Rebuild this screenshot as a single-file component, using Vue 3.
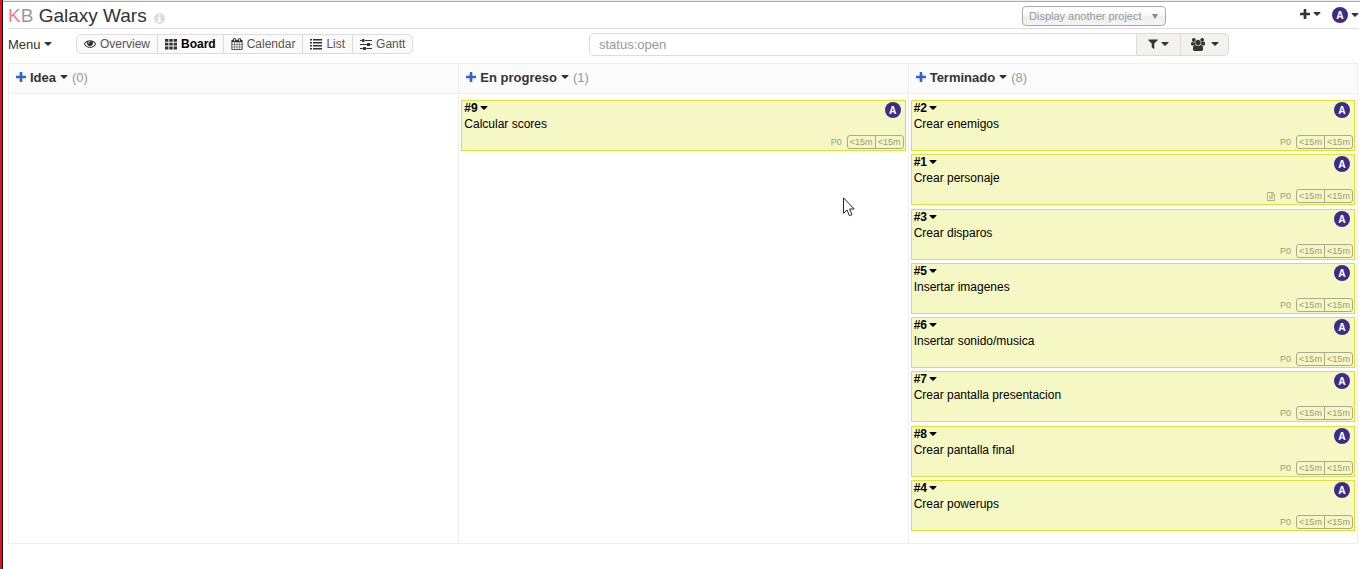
<script setup>
import { h, ref } from 'vue'

const glyphs = {
  caret: ['384 640 1024 576', 'M1408 704q0 26-19 45l-448 448q-19 19-45 19t-45-19l-448-448q-19-19-19-45t19-45 45-19h896q26 0 45 19t19 45z'],
  plus: ['192 128 1408 1408', 'M1600 736v192q0 40-28 68t-68 28h-416v416q0 40-28 68t-68 28h-192q-40 0-68-28t-28-68v-416h-416q-40 0-68-28t-28-68v-192q0-40 28-68t68-28h416v-416q0-40 28-68t68-28h192q40 0 68 28t28 68v416h416q40 0 68 28t28 68z'],
  info: ['128 128 1536 1536', 'M1152 1376v-160q0-14-9-23t-23-9h-96v-512q0-14-9-23t-23-9h-320q-14 0-23 9t-9 23v160q0 14 9 23t23 9h96v320h-96q-14 0-23 9t-9 23v160q0 14 9 23t23 9h448q14 0 23-9t9-23zm-128-896v-160q0-14-9-23t-23-9h-192q-14 0-23 9t-9 23v160q0 14 9 23t23 9h192q14 0 23-9t9-23zm640 416q0 209-103 385.5t-279.5 279.5-385.5 103-385.5-103-279.5-279.5-103-385.5 103-385.5 279.5-279.5 385.5-103 385.5 103 279.5 279.5 103 385.5z'],
  eye: ['0 64 1792 1792', 'M1664 960q-152-236-381-353 61 104 61 225 0 185-131.5 316.5t-316.5 131.5-316.5-131.5-131.5-316.5q0-121 61-225-229 117-381 353 133 205 333.5 326.5t434.5 121.5 434.5-121.5 333.5-326.5zm-720-384q0-20-14-34t-34-14q-125 0-214.5 89.5t-89.5 214.5q0 20 14 34t34 14 34-14 14-34q0-86 61-147t147-61q20 0 34-14t14-34zm848 384q0 34-20 69-140 230-376.5 368.5t-499.5 138.5-499.5-139-376.5-368q-20-35-20-69t20-69q140-229 376.5-368t499.5-139 499.5 139 376.5 368q20 35 20 69z'],
  grid: ['0 0 12 12', 'M0 1h3.4v2.8H0zM4.3 1h3.4v2.8H4.3zM8.6 1H12v2.8H8.6zM0 4.8h3.4v2.8H0zM4.3 4.8h3.4v2.8H4.3zM8.6 4.8H12v2.8H8.6zM0 8.6h3.4v2.8H0zM4.3 8.6h3.4v2.8H4.3zM8.6 8.6H12v2.8H8.6z'],
  calendar: ['0 0 1792 1792', 'M192 1664h288v-288h-288v288zm352 0h320v-288h-320v288zm-352-352h288v-320h-288v320zm352 0h320v-320h-320v320zm-352-384h288v-288h-288v288zm736 736h320v-288h-320v288zm-384-736h320v-288h-320v288zm768 736h288v-288h-288v288zm-384-352h320v-320h-320v320zm-352-864v-288q0-13-9.5-22.5t-22.5-9.5h-64q-13 0-22.5 9.5t-9.5 22.5v288q0 13 9.5 22.5t22.5 9.5h64q13 0 22.5-9.5t9.5-22.5zm736 864h288v-320h-288v320zm-384-384h320v-288h-320v288zm384 0h288v-288h-288v288zm32-480v-288q0-13-9.5-22.5t-22.5-9.5h-64q-13 0-22.5 9.5t-9.5 22.5v288q0 13 9.5 22.5t22.5 9.5h64q13 0 22.5-9.5t9.5-22.5zm384-64v1280q0 52-38 90t-90 38h-1408q-52 0-90-38t-38-90v-1280q0-52 38-90t90-38h128v-96q0-66 47-113t113-47h64q66 0 113 47t47 113v96h384v-96q0-66 47-113t113-47h64q66 0 113 47t47 113v96h128q52 0 90 38t38 90z'],
  list: ['0 0 12 12', 'M0 1h2v1.6H0zM3 1h9v1.6H3zM0 4h2v1.6H0zM3 4h9v1.6H3zM0 7h2v1.6H0zM3 7h9v1.6H3zM0 10h2v1.6H0zM3 10h9v1.6H3z'],
  sliders: ['0 0 1536 1536', 'M0 256h224v128H0zM640 256h896v128H640zM0 768h864v128H0zM1312 768h224v128h-224zM0 1280h352v128H0zM800 1280h736v128H800zM320 128h192q64 0 64 64v256q0 64-64 64H320q-64 0-64-64V192q0-64 64-64zM960 640h256q64 0 64 64v256q0 64-64 64H960q-64 0-64-64V704q0-64 64-64zM448 1152h256q64 0 64 64v256q0 64-64 64H448q-64 0-64-64v-256q0-64 64-64z'],
  filter: ['192 192 1408 1472', 'M1595 295q17 41-14 70l-493 493v742q0 42-39 59-13 5-25 5-27 0-45-19l-256-256q-19-19-19-45v-486l-493-493q-31-29-14-70 17-39 59-39h1280q42 0 59 39z'],
  users: ['-64 0 1920 1792', 'M529 896q-162 5-265 128h-134q-82 0-138-40.5t-56-118.5q0-353 124-353 6 0 43.5 21t97.5 42.5 119 21.5q67 0 133-23-5 37-5 66 0 159 93 287zm1071 637q0 120-73 189.5t-194 69.5h-874q-121 0-194-69.5t-73-189.5q0-53 3.5-103.5t14-109 26.5-108.5 43-97.5 62-81 85.5-53.5 111.5-20q10 0 43 21.5t73 48 107 48 135 21.5 135-21.5 107-48 73-48 43-21.5q61 0 111.5 20t85.5 53.5 62 81 43 97.5 26.5 108.5 14 109 3.5 103.5zm-1024-1277q0 106-75 181t-181 75-181-75-75-181 75-181 181-75 181 75 75 181zm704 384q0 159-112.5 271.5t-271.5 112.5-271.5-112.5-112.5-271.5 112.5-271.5 271.5-112.5 271.5 112.5 112.5 271.5zm576 225q0 78-56 118.5t-138 40.5h-134q-103-123-265-128 93-128 93-287 0-29-5-66 66 23 133 23 59 0 119-21.5t97.5-42.5 43.5-21q124 0 124 353zm-128-609q0 106-75 181t-181 75-181-75-75-181 75-181 181-75 181 75 75 181z'],
  file: ['128 0 1536 1792', 'M1596 380q28 28 48 76t20 88v1152q0 40-28 68t-68 28h-1344q-40 0-68-28t-28-68v-1600q0-40 28-68t68-28h896q40 0 88 20t76 48zm-444-244v376h376q-10-29-22-41l-313-313q-12-12-41-22zm384 1528v-1024h-416q-40 0-68-28t-28-68v-416h-768v1536h1280zm-1024-864q0-14 9-23t23-9h704q14 0 23 9t9 23v64q0 14-9 23t-23 9h-704q-14 0-23-9t-9-23v-64zm736 224q14 0 23 9t9 23v64q0 14-9 23t-23 9h-704q-14 0-23-9t-9-23v-64q0-14 9-23t23-9h704zm0 256q14 0 23 9t9 23v64q0 14-9 23t-23 9h-704q-14 0-23-9t-9-23v-64q0-14 9-23t23-9h704z'],
}

const Icon = (props) =>
  h('svg', { viewBox: glyphs[props.name][0], 'aria-hidden': 'true' }, [
    h('path', { d: glyphs[props.name][1], fill: 'currentColor' }),
  ])
Icon.props = ['name']

const views = [
  { label: 'Overview', icon: 'eye' },
  { label: 'Board', icon: 'grid', active: true },
  { label: 'Calendar', icon: 'calendar' },
  { label: 'List', icon: 'list' },
  { label: 'Gantt', icon: 'sliders' },
]

const query = ref('status:open')

const columns = [
  { title: 'Idea', tasks: [] },
  { title: 'En progreso', tasks: [{ id: 9, title: 'Calcular scores' }] },
  {
    title: 'Terminado',
    tasks: [
      { id: 2, title: 'Crear enemigos' },
      { id: 1, title: 'Crear personaje', note: true },
      { id: 3, title: 'Crear disparos' },
      { id: 5, title: 'Insertar imagenes' },
      { id: 6, title: 'Insertar sonido/musica' },
      { id: 7, title: 'Crear pantalla presentacion' },
      { id: 8, title: 'Crear pantalla final' },
      { id: 4, title: 'Crear powerups' },
    ],
  },
]
</script>

<template>
  <div class="frame">
    <div class="page">
      <header class="top">
        <h1><a href="#" class="logo"><span>K</span>B</a> Galaxy Wars</h1>
        <Icon name="info" class="info" />
        <div class="project">
          <select aria-label="Display another project">
            <option>Display another project</option>
          </select>
          <span class="project-arrow"></span>
        </div>
        <button class="plain add" aria-label="New"><Icon name="plus" class="i-plus" /><Icon name="caret" class="caret" /></button>
        <button class="plain user" aria-label="User menu"><span class="avatar">A</span><Icon name="caret" class="caret" /></button>
      </header>

      <div class="toolbar">
        <button class="plain menu">Menu<Icon name="caret" class="caret" /></button>
        <nav class="views">
          <a v-for="v in views" :key="v.label" href="#" :class="{ active: v.active }">
            <Icon :name="v.icon" class="i-view" />{{ v.label }}
          </a>
        </nav>
        <form class="search" @submit.prevent>
          <input v-model="query" type="text" aria-label="Search" />
          <button type="button" class="filter" aria-label="Filters"><Icon name="filter" class="i-filter" /><Icon name="caret" class="caret" /></button>
          <button type="button" class="people" aria-label="Users"><Icon name="users" class="i-users" /><Icon name="caret" class="caret" /></button>
        </form>
      </div>

      <main class="board">
        <section v-for="c in columns" :key="c.title" class="column">
          <h2>
            <button class="plain blue" aria-label="Add a task"><Icon name="plus" class="i-plus" /></button>
            <button class="plain name">{{ c.title }}<Icon name="caret" class="caret" /></button>
            <span class="count">({{ c.tasks.length }})</span>
          </h2>
          <div class="tasks">
            <article v-for="t in c.tasks" :key="t.id" class="task">
              <div class="task-head">
                <button class="plain number">#{{ t.id }}<Icon name="caret" class="caret" /></button>
                <span class="avatar">A</span>
              </div>
              <a href="#" class="task-title">{{ t.title }}</a>
              <div class="task-foot">
                <Icon v-if="t.note" name="file" class="i-file" />
                <span>P0</span>
                <span class="times"><span>&lt;15m</span><span>&lt;15m</span></span>
              </div>
            </article>
          </div>
        </section>
      </main>

      <svg class="pointer" viewBox="0 0 12 20" aria-hidden="true">
        <path d="M.5 .8v15.4l3.5-3.3 2.4 5.8 2.6-1.1-2.4-5.6h4.6z" fill="#fff" stroke="#223" />
      </svg>
    </div>
  </div>
</template>

<style>
body {
  background: #fff;
}
</style>

<style scoped>
.frame {
  box-sizing: border-box;
  min-height: 100vh;
  display: flex;
  border-left: 2px solid #e8101c;
  font-family: "Liberation Sans", Arial, sans-serif;
  font-size: 12px;
  color: #333;
}
.page {
  flex: 1;
  min-width: 0;
  position: relative;
  padding: 0 2px 0 5px;
  border-left: 1px solid #000;
  background: linear-gradient(#eee 1px, #aaa 1px, #aaa 2px, transparent 2px);
}
a {
  color: inherit;
  text-decoration: none;
}
button {
  font: inherit;
  color: inherit;
  cursor: pointer;
}
.plain {
  display: inline-flex;
  align-items: center;
  padding: 0;
  border: 0;
  background: none;
}
svg {
  display: block;
  flex: none;
}
.caret {
  width: 8px;
  height: 4px;
}
.i-plus {
  width: 10px;
  height: 10px;
}
.avatar {
  display: block;
  width: 16px;
  height: 16px;
  border-radius: 50%;
  background: #3d2b87;
  color: #fff;
  font: bold 10px/16px "Open Sans", sans-serif;
  text-align: center;
}

.top {
  display: flex;
  align-items: center;
  height: 26px;
  padding-top: 2px;
  border-bottom: 1px solid #ddd;
}
h1 {
  margin: 0;
  padding-top: 2px;
  font-size: 19px;
  line-height: 24px;
  font-weight: normal;
}
.logo {
  color: #999;
}
.logo span {
  color: #f08080;
}
.info {
  width: 11px;
  height: 11px;
  margin: 6px 0 0 7px;
  color: #ddd;
}
.project {
  position: relative;
  margin: 2px 134px 0 auto;
}
.project select {
  display: block;
  width: 144px;
  height: 20px;
  padding: 0 6px;
  appearance: none;
  border: 1px solid #aaa;
  border-radius: 4px;
  background: linear-gradient(#fff 20%, #f6f6f6 50%, #eee 52%, #f4f4f4);
  color: #999;
  font: 11px "Liberation Sans", Arial, sans-serif;
}
.project-arrow {
  position: absolute;
  top: 8px;
  right: 8px;
  border: 3px solid transparent;
  border-top: 5px solid #888;
  border-bottom: 0;
  pointer-events: none;
}
.add,
.user {
  gap: 3px;
  height: 20px;
  margin-right: -1px;
}
.add {
  padding-bottom: 3px;
}
.user {
  margin-left: 12px;
}

.toolbar {
  display: flex;
  align-items: center;
  height: 30px;
  margin-bottom: 4px;
}
.menu {
  gap: 3px;
  width: 68px;
  height: 16px;
  font-size: 13px;
}
.views {
  display: flex;
  border: 1px solid #ddd;
  border-radius: 5px;
  background: #fafafa;
}
.views a {
  display: flex;
  align-items: center;
  gap: 4px;
  height: 18px;
  padding: 0 7px;
  color: #555;
}
.views a + a {
  border-left: 1px solid #ddd;
}
.views a.active {
  color: #000;
  font-weight: bold;
}
.i-view {
  width: 12px;
  height: 12px;
  color: #333;
}
.search {
  display: flex;
  width: 640px;
  margin: 0 129px 0 auto;
}
.search input {
  flex: 1;
  min-width: 0;
  box-sizing: border-box;
  height: 23px;
  padding: 0 9px;
  border: 1px solid #dedcd6;
  border-radius: 5px 0 0 5px;
  color: #999;
  font: 13px "Liberation Sans", Arial, sans-serif;
}
.search button {
  display: flex;
  align-items: center;
  justify-content: center;
  gap: 3px;
  width: 44px;
  padding: 0;
  border: 1px solid #dedad2;
  border-left: 0;
  background: #f4f2ee;
}
.search .people {
  gap: 6px;
  width: 48px;
  border-radius: 0 5px 5px 0;
}
.i-filter {
  width: 10px;
  height: 10px;
}
.i-users {
  width: 14px;
  height: 13px;
}

.board {
  display: grid;
  grid-template-columns: repeat(3, 1fr);
  border: 1px solid #eee;
}
.column {
  display: flex;
  flex-direction: column;
}
.column + .column {
  border-left: 1px solid #eee;
}
h2 {
  display: flex;
  align-items: center;
  gap: 4px;
  height: 26px;
  margin: 0;
  padding: 0 7px 3px;
  border-bottom: 1px solid #eee;
  background: #fbfbfb;
  font-size: 13px;
}
.blue {
  color: #36c;
}
.name {
  gap: 4px;
}
.count {
  color: #999;
  font-weight: normal;
}
.tasks {
  flex: 1;
  display: flex;
  flex-direction: column;
  justify-content: space-between;
  min-height: 431px;
  padding: 6px 2px 12px;
}
.task {
  box-sizing: border-box;
  height: 51px;
  padding: 0 2px;
  border: 1px solid #dfe32d;
  background: #f5f7c4;
  color: #000;
}
.task-head {
  display: flex;
  justify-content: space-between;
  height: 16px;
}
.task-head .avatar {
  margin: 1px 2px 0 0;
}
.number {
  gap: 2px;
  height: 14px;
  font-weight: bold;
}
.task-title {
  display: block;
  line-height: 15px;
}
.task-foot {
  display: flex;
  align-items: center;
  justify-content: flex-end;
  gap: 5px;
  margin-top: 3px;
  color: #999b7c;
  font-size: 9px;
  line-height: 12px;
}
.i-file {
  width: 8px;
  height: 9px;
}
.times {
  display: flex;
  margin-right: -1px;
  border: 1px solid #a9ab8a;
  border-radius: 3px;
}
.times span {
  width: 27px;
  text-align: center;
}
.times span + span {
  border-left: 1px solid #a9ab8a;
}
.pointer {
  position: absolute;
  left: 840px;
  top: 197px;
  width: 12px;
  height: 20px;
}
</style>
